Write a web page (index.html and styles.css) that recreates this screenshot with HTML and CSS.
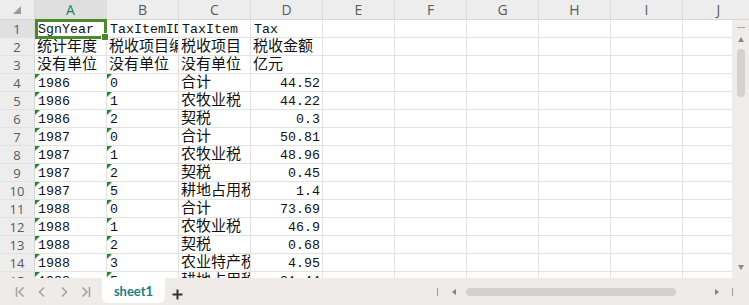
FILE: index.html
```html
<!DOCTYPE html>
<html lang="zh-CN">
<head>
    <meta charset="UTF-8">
    <meta name="viewport" content="width=device-width, initial-scale=1.0">
    <title>sheet1</title>
    <link rel="stylesheet" href="styles.css">
</head>
<body>

    <div class="sheet">
        <div class="main">
            <div class="grid-wrap">
                <div class="grid" id="grid"></div>
                <!-- selected cell A1 -->
                <div class="selection"><span class="handle"></span></div>
            </div>

            <div class="vscroll">
                <div class="vscroll-head"></div>
                <div class="vscroll-body">
                    <span class="vs-dash"></span>
                    <span class="vs-up"></span>
                    <span class="vs-thumb"></span>
                    <span class="vs-down"></span>
                </div>
            </div>
        </div>

        <div class="tabbar">
            <div class="nav">
                <svg width="10" height="12" viewBox="0 0 10 12"><path d="M1.5 1v10M8.5 1.5L4 6l4.5 4.5" fill="none" stroke="#a3a3a3" stroke-width="1.6"/></svg>
                <svg width="10" height="12" viewBox="0 0 10 12"><path d="M7 1.5L2.5 6 7 10.5" fill="none" stroke="#a3a3a3" stroke-width="1.6"/></svg>
                <svg width="10" height="12" viewBox="0 0 10 12"><path d="M3 1.5L7.5 6 3 10.5" fill="none" stroke="#a3a3a3" stroke-width="1.6"/></svg>
                <svg width="10" height="12" viewBox="0 0 10 12"><path d="M1.5 1.5L6 6l-4.5 4.5M8.5 1v10" fill="none" stroke="#a3a3a3" stroke-width="1.6"/></svg>
            </div>
            <div class="tab">sheet1</div>
            <div class="add">
                <svg width="11" height="11" viewBox="0 0 11 11"><path d="M5.5 0.5v10M0.5 5.5h10" stroke="#333" stroke-width="2"/></svg>
            </div>
            <div class="hscroll">
                <span class="hs-bar"></span>
                <span class="hs-left"></span>
                <span class="hs-thumb"></span>
                <span class="hs-right"></span>
                <span class="hs-bar"></span>
            </div>
        </div>
    </div>

    <script>
        const cols = ['A', 'B', 'C', 'D', 'E', 'F', 'G', 'H', 'I', 'J'];
        const rows = [
            ['SgnYear', 'TaxItemID', 'TaxItem', 'Tax'],
            ['统计年度', '税收项目编号', '税收项目', '税收金额'],
            ['没有单位', '没有单位', '没有单位', '亿元'],
            ['1986', '0', '合计', '44.52'],
            ['1986', '1', '农牧业税', '44.22'],
            ['1986', '2', '契税', '0.3'],
            ['1987', '0', '合计', '50.81'],
            ['1987', '1', '农牧业税', '48.96'],
            ['1987', '2', '契税', '0.45'],
            ['1987', '5', '耕地占用税', '1.4'],
            ['1988', '0', '合计', '73.69'],
            ['1988', '1', '农牧业税', '46.9'],
            ['1988', '2', '契税', '0.68'],
            ['1988', '3', '农业特产税', '4.95'],
            ['1988', '5', '耕地占用税', '21.44']
        ];

        const grid = document.getElementById('grid');

        // column headers
        let html = '<div class="corner"><svg width="8" height="8" viewBox="0 0 8 8"><path d="M8 0V8H0z" fill="#9a9a9a"/></svg></div>';
        cols.forEach((c, i) => {
            html += `<div class="col-head${i === 0 ? ' active' : ''}">${c}</div>`;
        });

        rows.forEach((row, r) => {
            html += `<div class="row-head${r === 0 ? ' active' : ''}">${r + 1}</div>`;
            cols.forEach((c, i) => {
                const value = row[i] || '';
                let cls = 'cell';
                if (/[\u4e00-\u9fff]/.test(value)) cls += ' zh';
                if (i === 3 && r > 2) cls += ' num';
                if (i < 2 && r > 2) cls += ' flag';
                html += `<div class="${cls}">${value}</div>`;
            });
        });

        grid.innerHTML = html;
    </script>

</body>
</html>
```

FILE: styles.css
```css
body {
    margin: 0;
    padding: 0;
    font-family: "Liberation Mono", "Noto Sans CJK SC", monospace;
    background-color: #ffffff;
}

.sheet {
    width: 749px;
    height: 305px;
    display: flex;
    flex-direction: column;
    overflow: hidden;
}

.main {
    display: flex;
    height: 278px;
}

.grid-wrap {
    position: relative;
    width: 732px;
    height: 278px;
    overflow: hidden;
}

.grid {
    display: grid;
    grid-template-columns: 35px repeat(10, 72px);
    grid-template-rows: 20px;
    grid-auto-rows: 18px;
}

/* headers */
.corner,
.col-head,
.row-head {
    background-color: #ededed;
    color: #5a5a5a;
    font-family: "Open Sans", "Noto Sans", sans-serif;
    box-sizing: border-box;
    display: flex;
    align-items: center;
    justify-content: center;
}

.corner {
    border-bottom: 1px solid #d6d6d6;
    border-right: 1px solid #d6d6d6;
    align-items: flex-end;
    justify-content: flex-end;
    padding: 0 13px 5px 0;
}

.col-head {
    font-size: 14px;
    border-bottom: 1px solid #d6d6d6;
    border-right: 1px solid #dcdcdc;
}

.row-head {
    font-size: 13px;
    border-right: 1px solid #d6d6d6;
    border-bottom: 1px solid #e2e2e2;
    padding-top: 1px;
}

.col-head.active {
    background-color: #dedede;
    color: #1f7a6c;
}

.row-head.active {
    background-color: #e0e0e0;
}

/* cells */
.cell {
    position: relative;
    box-sizing: border-box;
    border-right: 1px solid #e2e2e2;
    border-bottom: 1px solid #e2e2e2;
    padding: 2px 2px 0 3px;
    font-size: 13.3px;
    line-height: 16px;
    color: #111;
    white-space: nowrap;
    overflow: hidden;
}

.cell.zh {
    font-size: 15px;
    padding-left: 2px;
}

.cell.num {
    text-align: right;
}

/* number stored as text marker */
.cell.flag::before {
    content: "";
    position: absolute;
    top: 0;
    left: 0;
    border-top: 5px solid #1e8c2a;
    border-right: 5px solid transparent;
}

.selection {
    position: absolute;
    left: 35px;
    top: 19px;
    width: 72px;
    height: 20px;
    box-sizing: border-box;
    border: 3px solid #4a8a2c;
}

.selection .handle {
    position: absolute;
    right: -5px;
    bottom: -5px;
    width: 6px;
    height: 6px;
    background-color: #4a8a2c;
    border: 1px solid #fff;
}

/* vertical scrollbar */
.vscroll {
    width: 17px;
    display: flex;
    flex-direction: column;
}

.vscroll-head {
    height: 20px;
    box-sizing: border-box;
    background-color: #ededed;
    border-bottom: 1px solid #d6d6d6;
}

.vscroll-body {
    flex: 1;
    background-color: #efecea;
    display: flex;
    flex-direction: column;
    align-items: center;
    padding-top: 7px;
}

.vs-dash {
    width: 8px;
    height: 1px;
    background-color: #a8a8a8;
}

.vs-up {
    margin-top: 9px;
    border-bottom: 5px solid #8a8a8a;
    border-left: 3px solid transparent;
    border-right: 3px solid transparent;
}

.vs-thumb {
    margin-top: 7px;
    width: 8px;
    height: 48px;
    border-radius: 4px;
    background-color: #d4d1cf;
}

.vs-down {
    margin-top: auto;
    margin-bottom: 8px;
    border-top: 5px solid #8a8a8a;
    border-left: 3px solid transparent;
    border-right: 3px solid transparent;
}

/* sheet tabs */
.tabbar {
    height: 27px;
    display: flex;
    align-items: flex-start;
    background-color: #efebe9;
}

.nav {
    display: flex;
    gap: 12px;
    padding: 8px 0 0 15px;
    width: 80px;
}

.tab {
    margin-left: 7px;
    width: 63px;
    height: 25px;
    background-color: #ffffff;
    border-radius: 0 0 6px 6px;
    color: #1a8080;
    font-family: Lato, "Open Sans", sans-serif;
    font-weight: bold;
    font-size: 13px;
    text-align: center;
    line-height: 26px;
}

.add {
    margin-left: 7px;
    padding-top: 9px;
}

.hscroll {
    margin-left: auto;
    width: 315px;
    height: 27px;
    display: flex;
    align-items: center;
    padding-left: 3px;
    box-sizing: border-box;
}

.hs-bar {
    width: 1px;
    height: 8px;
    background-color: #9e9e9e;
}

.hs-left {
    margin-left: 14px;
    border-right: 4px solid #808080;
    border-top: 3px solid transparent;
    border-bottom: 3px solid transparent;
}

.hs-thumb {
    margin-left: 10px;
    width: 210px;
    height: 8px;
    border-radius: 4px;
    background-color: #d3d0ce;
}

.hs-right {
    margin-left: 39px;
    border-left: 4px solid #808080;
    border-top: 3px solid transparent;
    border-bottom: 3px solid transparent;
}

.hs-right + .hs-bar {
    margin-left: 13px;
}
```
